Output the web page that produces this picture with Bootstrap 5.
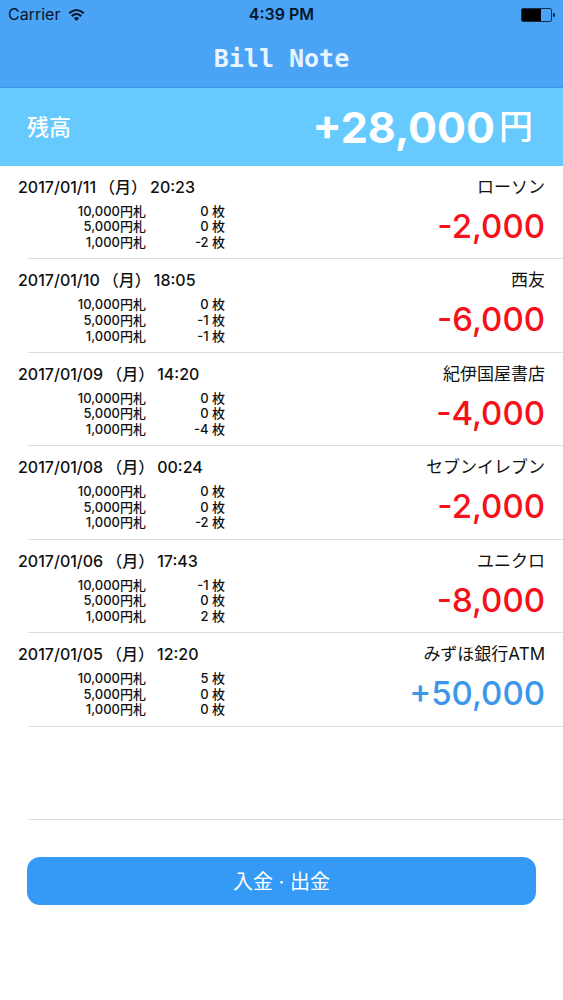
<!DOCTYPE html>
<html lang="ja">
<head>
<meta charset="utf-8">
<meta name="viewport" content="width=device-width, initial-scale=1">
<title>Bill Note</title>
<link href="https://cdn.jsdelivr.net/npm/bootstrap@5.3.0/dist/css/bootstrap.min.css" rel="stylesheet">
<style>
  body { font-family: Inter, "Noto Sans CJK JP", sans-serif; color: #111; background: #fff; }
  .app-top { background: #4ba3f5; border-bottom: 1px solid #3f93df; }
  .status-bar { height: 29px; padding: 0 8px; font-size: 16px; line-height: 29px; color: #06172b; }
  .status-bar > * { flex: 1 1 0; }
  .app-title { font-family: "DejaVu Sans Mono", monospace; font-size: 25px; font-weight: 700; line-height: 60px; height: 58px; color: #e6f5ff; margin: 0; text-align: center; }
  .balance { background: #66caff; color: #fff; height: 78px; padding: 0 30px 0 27px; }
  .balance-label { font-size: 22px; font-weight: 500; }
  .balance-sum { font-size: 43px; font-weight: 700; line-height: 48px; }
  .balance-unit { font-size: 34px; font-weight: 500; line-height: 48px; }
  .entries { display: grid; grid-auto-rows: 1fr; min-height: 654px; padding: 0; margin: 0; list-style: none; }
  .entry { padding: 0 18px; background: linear-gradient(#dedee0, #dedee0) 28px 100% / 100% 1px no-repeat; }
  .entry-head { padding-top: 9px; font-size: 17px; line-height: 24px; }
  .entry-date { font-size: 16px; font-weight: 500; }
  .entry-day { margin: 0 3px; }
  .entry-body { padding-top: 4px; }
  .notes { font-size: 13px; font-weight: 500; line-height: 14px; margin: 0; }
  .notes th { width: 128px; padding: 0; font-weight: 500; text-align: right; }
  .notes td { width: 79px; padding: 0; text-align: right; }
  .amount { font-size: 33px; font-weight: 500; line-height: 47px; color: #f5101a; }
  .amount.deposit { color: #3b97ea; }
  .app-foot { padding: 37px 27px; }
  .btn-entry { --bs-btn-bg: #359af5; --bs-btn-color: #fff; --bs-btn-hover-bg: #288ce6; --bs-btn-hover-color: #fff; height: 48px; border: 0; border-radius: 13px; font-size: 20px; line-height: 24px; padding: 8px 12px 6px; }
</style>
</head>
<body>
<header class="app-top">
  <div class="status-bar d-flex">
    <div class="d-flex align-items-center gap-2">
      <span>Carrier</span>
      <svg width="17" height="14" viewBox="0 0 18 14" fill="none" stroke="currentColor" stroke-width="2.2" aria-hidden="true"><path d="M1.2 5.2Q9-1.8 16.8 5.2M4 8.2Q9 3.7 14 8.2"/><path d="M6.2 10.4Q9 8 11.8 10.4L9 13.4Z" fill="currentColor" stroke="none"/></svg>
    </div>
    <div class="text-center fw-semibold">4:39 PM</div>
    <div class="d-flex align-items-center justify-content-end">
      <svg width="34" height="14" viewBox="0 0 34 14" aria-hidden="true"><rect x=".5" y=".5" width="30" height="13" rx="1.5" fill="none" stroke="#14304c"/><path d="M1 1H20V13H1Z" fill="#000"/><path d="M32 5Q34 5 34 7T32 9Z" fill="#06172b"/></svg>
    </div>
  </div>
  <h1 class="app-title">Bill Note</h1>
</header>
<main>
  <section class="balance d-flex align-items-center justify-content-between">
    <span class="balance-label">残高</span>
    <div class="d-flex align-items-center gap-1"><span class="balance-sum">+28,000</span><span class="balance-unit">円</span></div>
  </section>
  <ul class="entries">
    <li class="entry">
      <div class="entry-head d-flex justify-content-between"><span class="entry-date">2017/01/11<span class="entry-day">（月）</span>20:23</span><span>ローソン</span></div>
      <div class="entry-body d-flex justify-content-between">
        <table class="notes"><tr><th scope="row">10,000円札</th><td>0 枚</td></tr><tr><th scope="row">5,000円札</th><td>0 枚</td></tr><tr><th scope="row">1,000円札</th><td>-2 枚</td></tr></table>
        <span class="amount">-2,000</span>
      </div>
    </li>
    <li class="entry">
      <div class="entry-head d-flex justify-content-between"><span class="entry-date">2017/01/10<span class="entry-day">（月）</span>18:05</span><span>西友</span></div>
      <div class="entry-body d-flex justify-content-between">
        <table class="notes"><tr><th scope="row">10,000円札</th><td>0 枚</td></tr><tr><th scope="row">5,000円札</th><td>-1 枚</td></tr><tr><th scope="row">1,000円札</th><td>-1 枚</td></tr></table>
        <span class="amount">-6,000</span>
      </div>
    </li>
    <li class="entry">
      <div class="entry-head d-flex justify-content-between"><span class="entry-date">2017/01/09<span class="entry-day">（月）</span>14:20</span><span>紀伊国屋書店</span></div>
      <div class="entry-body d-flex justify-content-between">
        <table class="notes"><tr><th scope="row">10,000円札</th><td>0 枚</td></tr><tr><th scope="row">5,000円札</th><td>0 枚</td></tr><tr><th scope="row">1,000円札</th><td>-4 枚</td></tr></table>
        <span class="amount">-4,000</span>
      </div>
    </li>
    <li class="entry">
      <div class="entry-head d-flex justify-content-between"><span class="entry-date">2017/01/08<span class="entry-day">（月）</span>00:24</span><span>セブンイレブン</span></div>
      <div class="entry-body d-flex justify-content-between">
        <table class="notes"><tr><th scope="row">10,000円札</th><td>0 枚</td></tr><tr><th scope="row">5,000円札</th><td>0 枚</td></tr><tr><th scope="row">1,000円札</th><td>-2 枚</td></tr></table>
        <span class="amount">-2,000</span>
      </div>
    </li>
    <li class="entry">
      <div class="entry-head d-flex justify-content-between"><span class="entry-date">2017/01/06<span class="entry-day">（月）</span>17:43</span><span>ユニクロ</span></div>
      <div class="entry-body d-flex justify-content-between">
        <table class="notes"><tr><th scope="row">10,000円札</th><td>-1 枚</td></tr><tr><th scope="row">5,000円札</th><td>0 枚</td></tr><tr><th scope="row">1,000円札</th><td>2 枚</td></tr></table>
        <span class="amount">-8,000</span>
      </div>
    </li>
    <li class="entry">
      <div class="entry-head d-flex justify-content-between"><span class="entry-date">2017/01/05<span class="entry-day">（月）</span>12:20</span><span>みずほ銀行ATM</span></div>
      <div class="entry-body d-flex justify-content-between">
        <table class="notes"><tr><th scope="row">10,000円札</th><td>5 枚</td></tr><tr><th scope="row">5,000円札</th><td>0 枚</td></tr><tr><th scope="row">1,000円札</th><td>0 枚</td></tr></table>
        <span class="amount deposit">+50,000</span>
      </div>
    </li>
    <li class="entry" aria-hidden="true"></li>
  </ul>
</main>
<footer class="app-foot">
  <button type="button" class="btn btn-entry w-100">入金 · 出金</button>
</footer>
<script src="https://cdn.jsdelivr.net/npm/bootstrap@5.3.0/dist/js/bootstrap.bundle.min.js"></script>
</body>
</html>
